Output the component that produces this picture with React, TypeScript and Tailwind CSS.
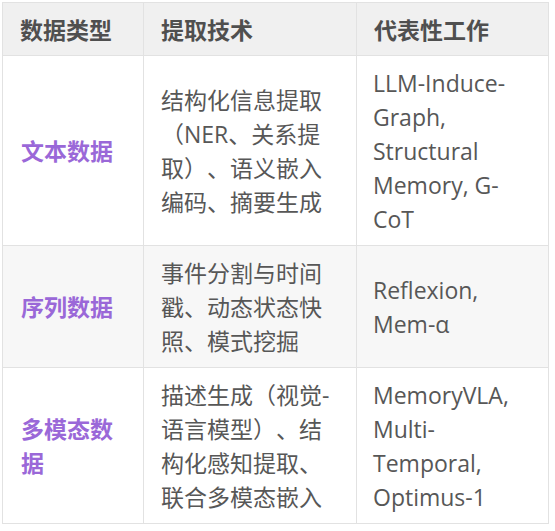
import React from 'react';

type Row = {
  type: string[];
  tech: string[];
  works: string[];
  shaded?: boolean;
};

const rows: Row[] = [
  {
    type: ['文本数据'],
    tech: ['结构化信息提取', '（NER、关系提', '取）、语义嵌入', '编码、摘要生成'],
    works: ['LLM-Induce-', 'Graph,', 'Structural', 'Memory, G-', 'CoT'],
  },
  {
    type: ['序列数据'],
    tech: ['事件分割与时间', '戳、动态状态快', '照、模式挖掘'],
    works: ['Reflexion,', 'Mem-α'],
    shaded: true,
  },
  {
    type: ['多模态数', '据'],
    tech: ['描述生成（视觉-', '语言模型）、结', '构化感知提取、', '联合多模态嵌入'],
    works: ['MemoryVLA,', 'Multi-', 'Temporal,', 'Optimus-1'],
  },
];

const Lines = ({ lines }: { lines: string[] }) => (
  <>
    {lines.map((l, i) => (
      <span key={i} className="block whitespace-nowrap">
        {l}
      </span>
    ))}
  </>
);

export default function App() {
  return (
    <div
      className="min-h-[531px] w-[555px] bg-white pl-[2px] pt-[2px]"
      style={{ fontFamily: '"Open Sans", "Noto Sans CJK SC", sans-serif' }}
    >
      <div className="grid w-[547px] grid-cols-[141px_213px_192px] border-l border-t border-[#e2e2e2] text-[23px] leading-[34px] [text-spacing-trim:space-all]">
        {/* header */}
        {['数据类型', '提取技术', '代表性工作'].map((h) => (
          <div
            key={h}
            className="flex items-center border-b border-r border-[#e2e2e2] bg-[#f0f0f0] px-[17px] pb-[8px] pt-[10px] font-bold text-[#4f4f4f]"
          >
            {h}
          </div>
        ))}

        {rows.map((r, idx) => (
          <React.Fragment key={idx}>
            <div
              className={`flex flex-col justify-center border-b border-r border-[#e2e2e2] px-[18px] py-[9.5px] font-bold text-[#9a68d8] ${
                r.shaded ? 'bg-[#f7f7f7]' : 'bg-white'
              }`}
            >
              <Lines lines={r.type} />
            </div>
            <div
              className={`flex flex-col justify-center border-b border-r border-[#e2e2e2] px-[17px] py-[9.5px] text-[#575757] ${
                r.shaded ? 'bg-[#f7f7f7]' : 'bg-white'
              }`}
            >
              <Lines lines={r.tech} />
            </div>
            <div
              className={`flex flex-col justify-center border-b border-r border-[#e2e2e2] px-[16px] py-[9.5px] text-[#575757] ${
                r.shaded ? 'bg-[#f7f7f7]' : 'bg-white'
              }`}
            >
              <Lines lines={r.works} />
            </div>
          </React.Fragment>
        ))}
      </div>
    </div>
  );
}
